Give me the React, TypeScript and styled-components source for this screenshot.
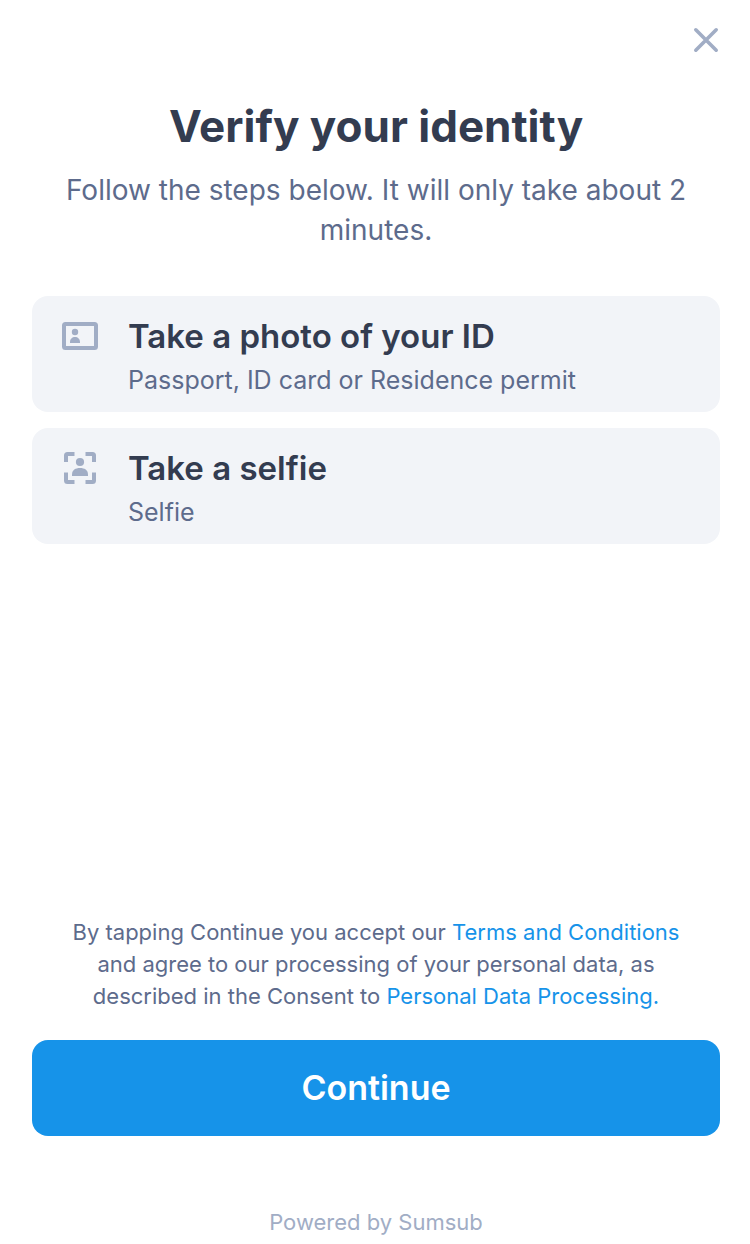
import React from 'react';
import styled, { createGlobalStyle } from 'styled-components';

const GlobalStyle = createGlobalStyle`
  *, *::before, *::after { box-sizing: border-box; }
  body {
    margin: 0;
    background: #ffffff;
    font-family: Inter, "Liberation Sans", sans-serif;
  }
`;

const Page = styled.main`
  display: flex;
  flex-direction: column;
  min-height: 100vh;
  padding: 16px 30px 8px 32px;
`;

const TopBar = styled.header`
  display: flex;
  justify-content: flex-end;
`;

const CloseButton = styled.button`
  display: flex;
  padding: 10px 0;
  border: 0;
  background: none;
  color: #a1adc5;
  cursor: pointer;
`;

const Title = styled.h1`
  margin: 32px 0 0;
  color: #333c50;
  font-size: 44px;
  font-weight: 700;
  line-height: 60px;
  text-align: center;
`;

const Subtitle = styled.p`
  margin: 14px 0 0;
  color: #5d6b8c;
  font-size: 28px;
  line-height: 40px;
  text-align: center;
`;

const Steps = styled.ul`
  display: flex;
  flex-direction: column;
  gap: 16px;
  margin: 46px 0;
  padding: 0;
  list-style: none;
`;

const Step = styled.li`
  display: flex;
  gap: 28px;
  padding: 16px 28px 14px;
  border-radius: 16px;
  background: #f2f4f8;
  color: #a1adc5;
`;

const StepIcon = styled.svg`
  flex: none;
  width: 40px;
  height: 48px;
`;

const StepTitle = styled.h2`
  margin: 0;
  color: #333c50;
  font-size: 33px;
  font-weight: 600;
  line-height: 48px;
`;

const StepText = styled.p`
  margin: 2px 0 0;
  color: #5d6b8c;
  font-size: 25px;
  line-height: 36px;
`;

const Legal = styled.p`
  margin: auto 0 28px;
  padding: 0 32px;
  color: #5d6b8c;
  font-size: 22px;
  line-height: 32px;
  text-align: center;
`;

const Link = styled.a`
  color: #1693e9;
  text-decoration: none;
`;

const ContinueButton = styled.button`
  width: 100%;
  padding: 24px;
  border: 0;
  border-radius: 16px;
  background: #1693e9;
  color: #ffffff;
  font-family: inherit;
  font-size: 34px;
  font-weight: 600;
  line-height: 48px;
  cursor: pointer;
`;

const Powered = styled.footer`
  margin-top: 72px;
  color: #a1adc5;
  font-size: 22px;
  line-height: 28px;
  text-align: center;
`;

export default function App() {
  return (
    <>
      <GlobalStyle />
      <Page>
        <TopBar>
          <CloseButton type="button" aria-label="Close">
            <svg width="28" height="28" viewBox="0 0 28 28" fill="none" stroke="currentColor" strokeWidth="3.6" strokeLinecap="round" aria-hidden="true">
              <path d="M3.8 3.8 24.2 24.2M24.2 3.8 3.8 24.2" />
            </svg>
          </CloseButton>
        </TopBar>

        <Title>Verify your identity</Title>
        <Subtitle>Follow the steps below. It will only take about 2 minutes.</Subtitle>

        <Steps>
          <Step>
            <StepIcon viewBox="0 0 40 48" fill="currentColor" aria-hidden="true">
              <rect x="4" y="12" width="32" height="24" rx="1.5" fill="none" stroke="currentColor" strokeWidth="4" />
              <circle cx="15" cy="20" r="3.2" />
              <path d="M10 31v-1c0-3 2.200-5 5-5s5 2 5 5v1z" />
            </StepIcon>
            <div>
              <StepTitle>Take a photo of your ID</StepTitle>
              <StepText>Passport, ID card or Residence permit</StepText>
            </div>
          </Step>
          <Step>
            <StepIcon viewBox="0 0 40 48" fill="currentColor" aria-hidden="true">
              <path
                d="M6 18V11.500A1.500 1.500 0 0 1 7.500 10H14.500M25.500 10h7A1.500 1.500 0 0 1 34 11.500V18M34 28.500v8a1.500 1.500 0 0 1-1.500 1.500H25.500M14.500 38H7.500A1.500 1.500 0 0 1 6 36.500V28.500"
                fill="none"
                stroke="currentColor"
                strokeWidth="4"
              />
              <circle cx="20" cy="18" r="4.1" />
              <path d="M12 32v-1.500c0-4.500 3.500-6.500 8-6.500s8 2 8 6.500V32z" />
            </StepIcon>
            <div>
              <StepTitle>Take a selfie</StepTitle>
              <StepText>Selfie</StepText>
            </div>
          </Step>
        </Steps>

        <Legal>
          By tapping Continue you accept our <Link href="#terms">Terms and Conditions</Link> and agree to our
          processing of your personal data, as described in the Consent to{' '}
          <Link href="#personal-data">Personal Data Processing.</Link>
        </Legal>
        <ContinueButton type="button">Continue</ContinueButton>
        <Powered>Powered by Sumsub</Powered>
      </Page>
    </>
  );
}
